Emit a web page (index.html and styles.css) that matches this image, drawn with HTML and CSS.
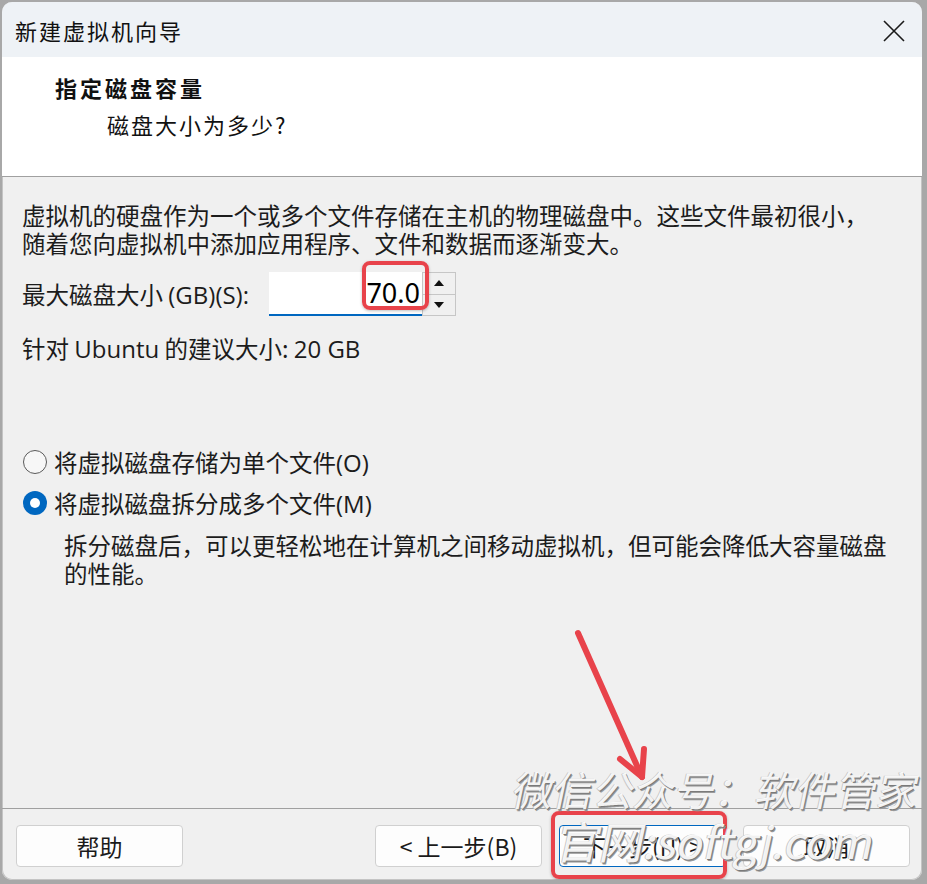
FILE: index.html
```html
<!DOCTYPE html>
<html lang="zh-CN">
<head>
<meta charset="utf-8">
<title>新建虚拟机向导</title>
<link rel="stylesheet" href="styles.css">
</head>
<body>
<div class="window">
  <div class="titlebar">
    <span class="title">新建虚拟机向导</span>
    <svg class="close" width="24" height="24" viewBox="0 0 24 24"><path d="M2 2 L22 22 M22 2 L2 22" stroke="#1a1a1a" stroke-width="1.6" fill="none"/></svg>
  </div>
  <div class="header">
    <div class="h-title">指定磁盘容量</div>
    <div class="h-sub">磁盘大小为多少?</div>
  </div>
  <div class="content">
    <p class="intro"><span class="line">虚拟机的硬盘作为一个或多个文件存储在主机的物理磁盘中。这些文件最初很小，</span><span class="line">随着您向虚拟机中添加应用程序、文件和数据而逐渐变大。</span></p>
    <div class="size-row">
      <span class="label">最大磁盘大小 <span class="lat">(GB)(S):</span></span>
      <div class="spin">
        <div class="spin-input">70.0</div>
        <div class="spin-btns">
          <div class="spin-btn"><span class="tri-up"></span></div>
          <div class="spin-btn"><span class="tri-down"></span></div>
        </div>
      </div>
    </div>
    <p class="rec">针对 <span class="lat">Ubuntu</span> 的建议大小: <span class="lat">20 GB</span></p>
    <div class="radios">
      <div class="radio"><span class="dot"></span><span>将虚拟磁盘存储为单个文件<span class="lat">(O)</span></span></div>
      <div class="radio"><span class="dot checked"></span><span>将虚拟磁盘拆分成多个文件<span class="lat">(M)</span></span></div>
      <p class="radio-desc"><span class="line">拆分磁盘后，可以更轻松地在计算机之间移动虚拟机，但可能会降低大容量磁盘</span><span class="line">的性能。</span></p>
    </div>
  </div>
  <div class="footer">
    <button class="btn">帮助</button>
    <div class="spacer"></div>
    <button class="btn">&lt; 上一步(B)</button>
    <button class="btn default">下一步(N) &gt;</button>
    <button class="btn">取消</button>
  </div>

  <div class="callout callout-size"></div>
  <div class="callout callout-next"></div>
  <svg class="arrow" width="920" height="878" viewBox="0 0 920 878">
    <g stroke="#e8434b" stroke-width="6" stroke-linecap="round" stroke-linejoin="round" fill="none">
      <path d="M576 631 L640 775"/>
      <path d="M618 757 L640 775 L642 747"/>
    </g>
  </svg>
  <div class="wm wm1">微信公众号：软件管家</div>
  <div class="wm wm2">官网:softgj.com</div>
</div>
</body>
</html>
```
FILE: styles.css
```css
* { box-sizing: border-box; }
html, body {
  margin: 0;
  padding: 0;
  width: 927px;
  height: 884px;
  overflow: hidden;
  background: #a8a8a8;
}
body {
  font-family: "Noto Sans CJK SC", "Noto Sans", sans-serif;
  color: #1a1a1a;
}
.window {
  position: relative;
  margin: 2px 5px 4px 2px;
  width: 920px;
  height: 878px;
  border-radius: 10px;
  background: #f0f0f0;
  overflow: hidden;
  display: flex;
  flex-direction: column;
  box-shadow: inset 0 0 0 1px #c4c4c4;
}
.titlebar {
  height: 55px;
  background: #eef2f6;
  display: flex;
  align-items: center;
  justify-content: space-between;
  padding: 0 16px 0 13px;
}
.title {
  font-size: 22px;
  letter-spacing: 2px;
  color: #111;
  line-height: 1;
  margin-top: 1px;
}
.close { display: block; margin-top: 2px; }
.header {
  height: 120px;
  background: #fff;
  border-bottom: 1px solid #a0a0a0;
  padding: 15px 0 0 53px;
}
.h-title {
  font-size: 22px;
  font-weight: bold;
  letter-spacing: 3px;
  line-height: 30px;
  color: #111;
}
.h-sub {
  font-size: 22px;
  letter-spacing: 2px;
  line-height: 30px;
  margin: 7px 0 0 52px;
  color: #111;
}
.content {
  flex: 1;
  padding: 24px 0 0 20px;
  font-size: 23.5px;
  color: #1c1c1c;
}
.lat {
  font-family: "Open Sans", "Noto Sans", sans-serif;
  font-size: 24px;
}
.intro, .radio-desc {
  margin: 0;
  white-space: nowrap;
}
.line {
  display: block;
  height: 28px;
  line-height: 28px;
}
.size-row {
  margin-top: 15px;
  height: 44px;
  display: flex;
  align-items: center;
}
.label {
  line-height: 28px;
  width: 247px;
  flex: none;
  white-space: nowrap;
}
.spin {
  display: flex;
  height: 44px;
}
.spin-input {
  width: 153px;
  height: 44px;
  background: #fff;
  border-bottom: 2px solid #0067c0;
  text-align: right;
  font-family: "Noto Sans", sans-serif;
  font-size: 27px;
  line-height: 42px;
  padding-right: 2px;
  color: #000;
}
.spin-btns {
  width: 34px;
  display: flex;
  flex-direction: column;
}
.spin-btn {
  flex: 1;
  background: #f0f0f0;
  border: 1px solid #c6c6c6;
  display: flex;
  align-items: center;
  justify-content: center;
}
.spin-btn + .spin-btn { border-top: none; }
.tri-up, .tri-down {
  width: 0; height: 0;
  border-left: 5px solid transparent;
  border-right: 5px solid transparent;
}
.tri-up { border-bottom: 6px solid #111; }
.tri-down { border-top: 6px solid #111; }
.rec {
  margin: 18px 0 0 0;
  line-height: 28px;
}
.radios { margin-top: 82px; }
.radio {
  height: 34px;
  display: flex;
  align-items: center;
  gap: 7px;
  margin-left: 1px;
}
.radio + .radio { margin-top: 7px; }
.dot {
  width: 24px;
  height: 24px;
  border-radius: 50%;
  border: 1.5px solid #5a5a5a;
  background: #f7f7f7;
  flex: none;
}
.dot.checked {
  border: none;
  background: #0067c0;
  display: flex;
  align-items: center;
  justify-content: center;
}
.dot.checked::after {
  content: "";
  width: 10px;
  height: 10px;
  border-radius: 50%;
  background: #fff;
}
.radio-desc {
  margin: 11px 0 0 42px;
}
.footer {
  height: 72px;
  border-top: 1px solid #a0a0a0;
  display: flex;
  align-items: flex-start;
  padding: 16px 12px 0 14px;
  gap: 17px;
}
.spacer { flex: 1; }
.btn {
  width: 167px;
  height: 42px;
  background: #fdfdfd;
  border: 1px solid #d0d0d0;
  border-radius: 4px;
  font-family: "Noto Sans CJK SC", "Noto Sans", sans-serif;
  font-size: 23px;
  color: #1a1a1a;
  padding: 0;
  line-height: 40px;
}
.btn.default {
  border: 1px solid #0067c0;
  box-shadow: inset 0 0 0 1px #fff;
}
.callout {
  position: absolute;
  border: 4px solid #e8434b;
  border-radius: 8px;
  box-shadow: 0 1px 3px rgba(0,0,0,0.25);
}
.callout-size { left: 360px; top: 259px; width: 67px; height: 49px; }
.callout-next { left: 549px; top: 809px; width: 176px; height: 68px; }
.arrow {
  position: absolute;
  left: 0;
  top: 0;
  pointer-events: none;
}
.wm {
  position: absolute;
  color: rgba(255,255,255,0.92);
  font-family: "Noto Sans CJK SC", "Noto Sans", sans-serif;
  line-height: 1;
  white-space: nowrap;
  transform: skewX(-12deg);
  text-shadow: 1px 1px 0 #7a7a7a, 2px 2px 0 #9a9a9a, -1px 0 0 #c8c8c8;
}
.wm1 { left: 512px; top: 767px; font-size: 40.5px; }
.wm2 { left: 556px; top: 816px; font-size: 44px; }
```
